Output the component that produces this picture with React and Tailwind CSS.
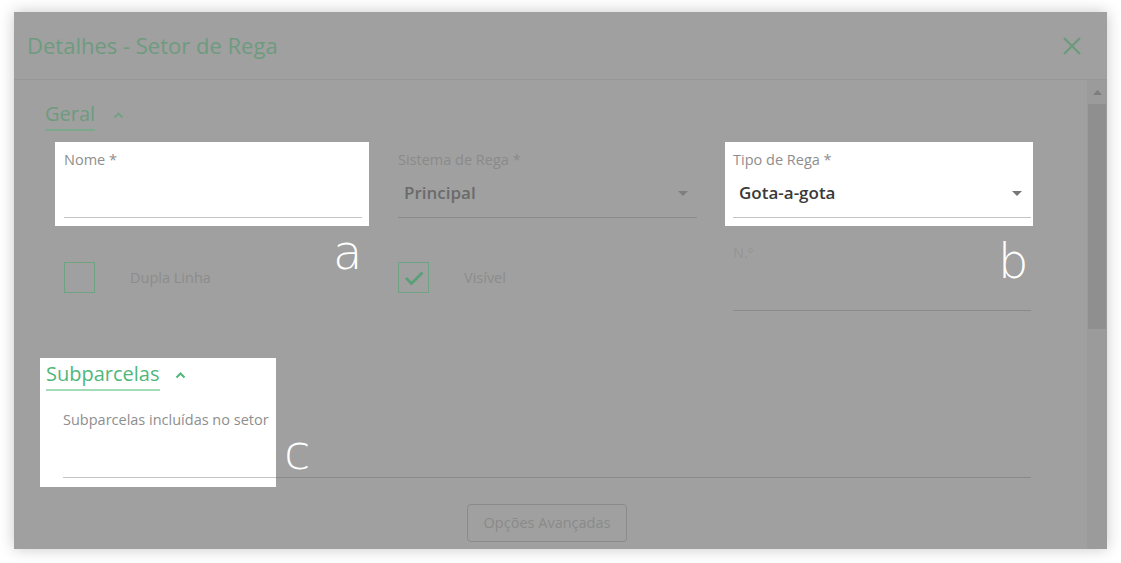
import React from 'react';

const font = { fontFamily: '"Open Sans", "Noto Sans", sans-serif' };

function ChevronUp({ color }) {
  return (
    <svg width="11" height="7" viewBox="0 0 11 7" className="block">
      <polyline points="1.5,5.5 5.5,1.5 9.5,5.5" fill="none" stroke={color} strokeWidth="2" />
    </svg>
  );
}

function Caret({ color }) {
  return (
    <svg width="10" height="5" viewBox="0 0 10 5" className="block">
      <polygon points="0,0 10,0 5,5" fill={color} />
    </svg>
  );
}

function Field({ label, value, caret, light }) {
  return (
    <div className="flex flex-col">
      <div className={`h-[18px] text-[14.5px] leading-[18px] ${light ? 'text-[#8e8e8e]' : 'text-[#8a8a8a]'}`}>{label}</div>
      <div className={`h-[49px] flex items-center justify-between pl-[6px] border-b ${light ? 'border-[#c4c4c4]' : 'border-[#8a8a8a]'}`}>
        <span className={`text-[17px] font-semibold ${light ? 'text-[#3a3a3a]' : 'text-[#6b6b6b]'}`}>{value}</span>
        {caret && (
          <span className="mr-[9px]">
            <Caret color={light ? '#777777' : '#7f7f7f'} />
          </span>
        )}
      </div>
    </div>
  );
}

function Check({ checked, label }) {
  return (
    <div className="self-start flex items-center gap-[35px] mt-[18px]">
      <div className="w-[31px] h-[31px] border border-[#6fa383] flex items-center justify-center">
        {checked && (
          <svg width="20" height="16" viewBox="0 0 20 16">
            <polyline points="2,8 7.5,13.5 18.5,2.5" fill="none" stroke="#5a9f76" strokeWidth="2.8" />
          </svg>
        )}
      </div>
      <span className="text-[14.5px] text-[#8c8c8c]">{label}</span>
    </div>
  );
}

export default function App() {
  const letter = 'absolute text-[48px] leading-[48px] text-white';
  const letterFont = { fontFamily: '"DejaVu Sans", sans-serif', fontWeight: 200 };

  return (
    <div className="w-[1121px] h-[563px] bg-white overflow-hidden pt-[12px]" style={font}>
      <div className="relative ml-[14px] w-[1093px] h-[537px] bg-[#a0a0a0] flex flex-col overflow-hidden shadow-[0_0_14px_rgba(0,0,0,0.22)]">
        {/* Header */}
        <div className="h-[68px] shrink-0 flex items-center justify-between pl-[13px] pr-[26px] border-b border-[#979797]">
          <span className="text-[22px] text-[#6e9b7f]">Detalhes - Setor de Rega</span>
          <svg width="18" height="18" viewBox="0 0 18 18">
            <line x1="1" y1="1" x2="17" y2="17" stroke="#6b9b7c" strokeWidth="2.2" />
            <line x1="17" y1="1" x2="1" y2="17" stroke="#6b9b7c" strokeWidth="2.2" />
          </svg>
        </div>

        <div className="flex flex-1 min-h-0">
          {/* Content */}
          <div className="flex-1 overflow-hidden pt-[20px]">
            <div className="pl-[31px] flex items-center gap-[18px]">
              <span className="text-[20px] leading-[28px] text-[#6e9b7f] pb-[1px] border-b-2 border-[#7aa98b]">Geral</span>
              <ChevronUp color="#74a085" />
            </div>

            <div className="ml-[50px] mt-[20px] grid grid-cols-[298px_299px_298px] gap-x-[36px] gap-y-[26px]">
              <div className="bg-white -ml-[9px] -mr-[7px] -mt-[9px] -mb-[8px] pl-[9px] pr-[7px] pt-[9px] pb-[8px]">
                <Field label="Nome *" value="" light />
              </div>
              <Field label="Sistema de Rega *" value="Principal" caret />
              <div className="bg-white -ml-[8px] -mr-[2px] -mt-[9px] -mb-[8px] pl-[8px] pr-[2px] pt-[9px] pb-[8px]">
                <Field label="Tipo de Rega *" value="Gota-a-gota" caret light />
              </div>

              <Check label="Dupla Linha" />
              <Check checked label="Visível" />
              <div className="flex flex-col">
                <div className="h-[18px] text-[14.5px] leading-[18px] text-[#959595]">N.º</div>
                <div className="h-[49px] border-b border-[#8a8a8a]" />
              </div>
            </div>

            {/* Subparcelas */}
            <div className="ml-[26px] mt-[47px] flex items-start">
              <div className="w-[236px] h-[129px] bg-white pl-[6px] pt-[2px] shrink-0">
                <div className="flex items-center gap-[15px]">
                  <span className="text-[20px] leading-[28px] text-[#4fb77b] pb-[1px] border-b-2 border-[#a6dbb9]">Subparcelas</span>
                  <ChevronUp color="#4fb77b" />
                </div>
                <div className="ml-[17px] mt-[20px] h-[18px] text-[14.5px] leading-[18px] text-[#8e8e8e] whitespace-nowrap">
                  Subparcelas incluídas no setor
                </div>
                <div className="ml-[17px] h-[49px] border-b border-[#c4c4c4]" />
              </div>
              <div className="w-[755px] mt-[119px] border-b border-[#8a8a8a]" />
            </div>

            <div className="ml-[49px] w-[968px] mt-[17px] flex justify-center">
              <div className="w-[160px] h-[38px] rounded-[4px] border border-[#8a8a8a] flex items-center justify-center text-[14.5px] text-[#8a8a8a]">
                Opções Avançadas
              </div>
            </div>
          </div>

          {/* Scrollbar */}
          <div className="w-[20px] shrink-0 bg-[#9b9b9b] flex flex-col items-center">
            <div className="h-[24px] flex items-center">
              <svg width="9" height="5" viewBox="0 0 9 5" className="block">
                <polygon points="0,5 9,5 4.5,0" fill="#7d7d7d" />
              </svg>
            </div>
            <div className="w-[18px] h-[225px] bg-[#8f8f8f]" />
          </div>
        </div>

        {/* Annotations */}
        <span className={letter} style={{ ...letterFont, left: 319, top: 216 }}>a</span>
        <span className={letter} style={{ ...letterFont, left: 984, top: 225 }}>b</span>
        <span className={letter} style={{ ...letterFont, left: 270, top: 416 }}>c</span>
      </div>
    </div>
  );
}
